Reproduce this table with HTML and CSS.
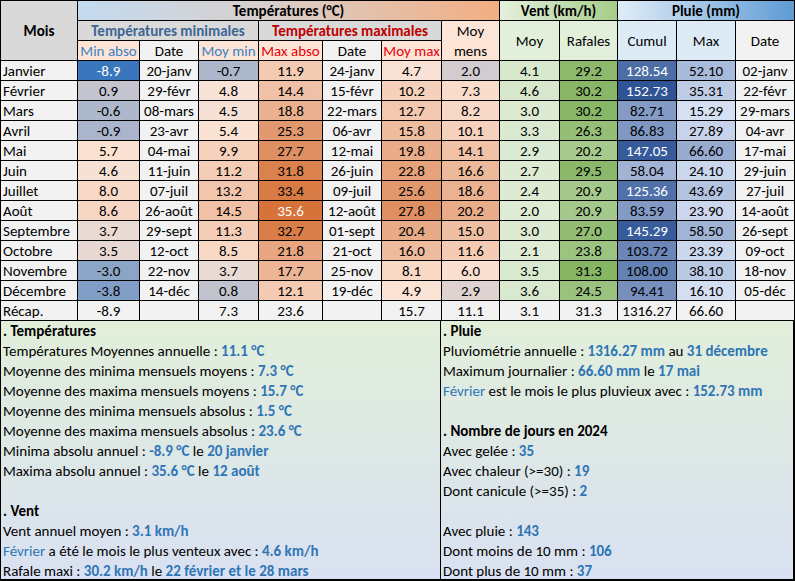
FILE: index.html
```html
<!DOCTYPE html>
<html lang="fr">
<head>
<meta charset="utf-8">
<title>Relevés 2024</title>
<link rel="stylesheet" href="styles.css">
</head>
<body>
<div class="sheet">
  <div class="grid">
    <div class="c hd-mois">Mois</div>
    <div class="c hd-temp">Températures (°C)</div>
    <div class="c hd-vent">Vent (km/h)</div>
    <div class="c hd-pluie">Pluie (mm)</div>

    <div class="c hd-tmin">Températures minimales</div>
    <div class="c hd-tmax">Températures maximales</div>
    <div class="c hd-mens">Moy<br>mens</div>
    <div class="c hd-vmoy">Moy</div>
    <div class="c hd-raf">Rafales</div>
    <div class="c hd-cumul">Cumul</div>
    <div class="c hd-pmax">Max</div>
    <div class="c hd-pdate">Date</div>

    <div class="c sub blue">Min abso</div>
    <div class="c sub-date">Date</div>
    <div class="c sub blue">Moy min</div>
    <div class="c sub red">Max abso</div>
    <div class="c sub-date">Date</div>
    <div class="c sub red">Moy max</div>

    <div class="c m">Janvier</div><div class="c t inv">-8.9</div><div class="c">20-janv</div><div class="c t">-0.7</div><div class="c t">11.9</div><div class="c">24-janv</div><div class="c t">4.7</div><div class="c t">2.0</div><div class="c w">4.1</div><div class="c w">29.2</div><div class="c r inv">128.54</div><div class="c r">52.10</div><div class="c">02-janv</div>
    <div class="c m">Février</div><div class="c t">0.9</div><div class="c">29-févr</div><div class="c t">4.8</div><div class="c t">14.4</div><div class="c">15-févr</div><div class="c t">10.2</div><div class="c t">7.3</div><div class="c w">4.6</div><div class="c w">30.2</div><div class="c r inv">152.73</div><div class="c r">35.31</div><div class="c">22-févr</div>
    <div class="c m">Mars</div><div class="c t">-0.6</div><div class="c">08-mars</div><div class="c t">4.5</div><div class="c t">18.8</div><div class="c">22-mars</div><div class="c t">12.7</div><div class="c t">8.2</div><div class="c w">3.0</div><div class="c w">30.2</div><div class="c r">82.71</div><div class="c r">15.29</div><div class="c">29-mars</div>
    <div class="c m">Avril</div><div class="c t">-0.9</div><div class="c">23-avr</div><div class="c t">5.4</div><div class="c t">25.3</div><div class="c">06-avr</div><div class="c t">15.8</div><div class="c t">10.1</div><div class="c w">3.3</div><div class="c w">26.3</div><div class="c r">86.83</div><div class="c r">27.89</div><div class="c">04-avr</div>
    <div class="c m">Mai</div><div class="c t">5.7</div><div class="c">04-mai</div><div class="c t">9.9</div><div class="c t">27.7</div><div class="c">12-mai</div><div class="c t">19.8</div><div class="c t">14.1</div><div class="c w">2.9</div><div class="c w">20.2</div><div class="c r inv">147.05</div><div class="c r">66.60</div><div class="c">17-mai</div>
    <div class="c m">Juin</div><div class="c t">4.6</div><div class="c">11-juin</div><div class="c t">11.2</div><div class="c t">31.8</div><div class="c">26-juin</div><div class="c t">22.8</div><div class="c t">16.6</div><div class="c w">2.7</div><div class="c w">29.5</div><div class="c r">58.04</div><div class="c r">24.10</div><div class="c">29-juin</div>
    <div class="c m">Juillet</div><div class="c t">8.0</div><div class="c">07-juil</div><div class="c t">13.2</div><div class="c t">33.4</div><div class="c">09-juil</div><div class="c t">25.6</div><div class="c t">18.6</div><div class="c w">2.4</div><div class="c w">20.9</div><div class="c r inv">125.36</div><div class="c r">43.69</div><div class="c">27-juil</div>
    <div class="c m">Août</div><div class="c t">8.6</div><div class="c">26-août</div><div class="c t">14.5</div><div class="c t inv">35.6</div><div class="c">12-août</div><div class="c t">27.8</div><div class="c t">20.2</div><div class="c w">2.0</div><div class="c w">20.9</div><div class="c r">83.59</div><div class="c r">23.90</div><div class="c">14-août</div>
    <div class="c m">Septembre</div><div class="c t">3.7</div><div class="c">29-sept</div><div class="c t">11.3</div><div class="c t">32.7</div><div class="c">01-sept</div><div class="c t">20.4</div><div class="c t">15.0</div><div class="c w">3.0</div><div class="c w">27.0</div><div class="c r inv">145.29</div><div class="c r">58.50</div><div class="c">26-sept</div>
    <div class="c m">Octobre</div><div class="c t">3.5</div><div class="c">12-oct</div><div class="c t">8.5</div><div class="c t">21.8</div><div class="c">21-oct</div><div class="c t">16.0</div><div class="c t">11.6</div><div class="c w">2.1</div><div class="c w">23.8</div><div class="c r">103.72</div><div class="c r">23.39</div><div class="c">09-oct</div>
    <div class="c m">Novembre</div><div class="c t">-3.0</div><div class="c">22-nov</div><div class="c t">3.7</div><div class="c t">17.7</div><div class="c">25-nov</div><div class="c t">8.1</div><div class="c t">6.0</div><div class="c w">3.5</div><div class="c w">31.3</div><div class="c r">108.00</div><div class="c r">38.10</div><div class="c">18-nov</div>
    <div class="c m">Décembre</div><div class="c t">-3.8</div><div class="c">14-déc</div><div class="c t">0.8</div><div class="c t">12.1</div><div class="c">19-déc</div><div class="c t">4.9</div><div class="c t">2.9</div><div class="c w">3.6</div><div class="c w">24.5</div><div class="c r">94.41</div><div class="c r">16.10</div><div class="c">05-déc</div>
    <div class="c m">Récap.</div><div class="c">-8.9</div><div class="c"></div><div class="c">7.3</div><div class="c">23.6</div><div class="c"></div><div class="c">15.7</div><div class="c">11.1</div><div class="c">3.1</div><div class="c">31.3</div><div class="c">1316.27</div><div class="c">66.60</div><div class="c"></div>
  </div>

  <div class="notes">
    <div class="panel panel-left">
      <div class="line title">. Températures</div>
      <div class="line">Températures Moyennes annuelle : <b class="v">11.1 °C</b></div>
      <div class="line">Moyenne des minima mensuels moyens : <b class="v">7.3 °C</b></div>
      <div class="line">Moyenne des maxima mensuels moyens : <b class="v">15.7 °C</b></div>
      <div class="line">Moyenne des minima mensuels absolus : <b class="v">1.5 °C</b></div>
      <div class="line">Moyenne des maxima mensuels absolus : <b class="v">23.6 °C</b></div>
      <div class="line">Minima absolu annuel : <b class="v">-8.9 °C</b> le <b class="v">20 janvier</b></div>
      <div class="line">Maxima absolu annuel : <b class="v">35.6 °C</b> le <b class="v">12 août</b></div>
      <div class="line"></div>
      <div class="line title">. Vent</div>
      <div class="line">Vent annuel moyen : <b class="v">3.1 km/h</b></div>
      <div class="line"><span class="mv">Février</span> a été le mois le plus venteux avec : <b class="v">4.6 km/h</b></div>
      <div class="line">Rafale maxi : <b class="v">30.2 km/h</b> le <b class="v">22 février et le 28 mars</b></div>
    </div>
    <div class="panel panel-right">
      <div class="line title">. Pluie</div>
      <div class="line">Pluviométrie annuelle : <b class="v">1316.27 mm</b> au <b class="v">31 décembre</b></div>
      <div class="line">Maximum journalier : <b class="v">66.60 mm</b> le <b class="v">17 mai</b></div>
      <div class="line"><span class="mv">Février</span> est le mois le plus pluvieux avec : <b class="v">152.73 mm</b></div>
      <div class="line"></div>
      <div class="line title">. Nombre de jours en 2024</div>
      <div class="line">Avec gelée : <b class="v">35</b></div>
      <div class="line">Avec chaleur (&gt;=30) : <b class="v">19</b></div>
      <div class="line">Dont canicule (&gt;=35) : <b class="v">2</b></div>
      <div class="line"></div>
      <div class="line">Avec pluie : <b class="v">143</b></div>
      <div class="line">Dont moins de 10 mm : <b class="v">106</b></div>
      <div class="line">Dont plus de 10 mm : <b class="v">37</b></div>
    </div>
  </div>
</div>
<script src="script.js"></script>
</body>
</html>
```

FILE: styles.css
```css
html, body {
  margin: 0;
  padding: 0;
  background: #ffffff;
}
body {
  font-family: Carlito, Lato, "DejaVu Sans", sans-serif;
  font-size: 15px;
  color: #000;
}
.sheet {
  width: 795px;
}
.grid {
  display: grid;
  grid-template-columns: 76px 61px 58px 59px 63px 58px 59px 57px 59px 57px 58px 58px 58px;
  grid-auto-rows: 19px;
  gap: 1px;
  padding: 1px;
  background: #000;
  width: 795px;
  box-sizing: border-box;
}
.c {
  display: flex;
  align-items: center;
  justify-content: center;
  background: #f2f2f2;
  white-space: nowrap;
  overflow: hidden;
  line-height: 1;
  padding-top: 1px;
}
.c.m {
  justify-content: flex-start;
  padding-left: 2px;
}
.inv {
  color: #fff;
}
.hd-mois {
  grid-column: 1;
  grid-row: 1 / span 3;
  background: #d9d9d9;
  font-weight: bold;
}
.hd-temp {
  grid-column: 2 / span 7;
  grid-row: 1;
  font-weight: bold;
  background: linear-gradient(to right, #c3dbf0, #d9cfcc 45%, #f2ae82);
}
.hd-vent {
  grid-column: 9 / span 2;
  grid-row: 1;
  font-weight: bold;
  background: linear-gradient(to right, #e4f0dc, #a6cd8b);
}
.hd-pluie {
  grid-column: 11 / span 3;
  grid-row: 1;
  font-weight: bold;
  background: linear-gradient(to right, #e1edf8, #5e9bd4);
}
.hd-tmin {
  grid-column: 2 / span 3;
  grid-row: 2;
  background: #d9d9d9;
  color: #3d6793;
  font-weight: bold;
}
.hd-tmax {
  grid-column: 5 / span 3;
  grid-row: 2;
  background: #d9d9d9;
  color: #c00000;
  font-weight: bold;
}
.hd-mens {
  grid-column: 8;
  grid-row: 2 / span 2;
  background: #fce4d6;
  text-align: center;
  line-height: 20px;
}
.hd-vmoy {
  grid-column: 9;
  grid-row: 2 / span 2;
  background: #e2efda;
}
.hd-raf {
  grid-column: 10;
  grid-row: 2 / span 2;
  background: #e2efda;
}
.hd-cumul {
  grid-column: 11;
  grid-row: 2 / span 2;
  background: #ddebf7;
}
.hd-pmax {
  grid-column: 12;
  grid-row: 2 / span 2;
  background: #ddebf7;
}
.hd-pdate {
  grid-column: 13;
  grid-row: 2 / span 2;
  background: #f2f2f2;
}
.sub {
  grid-row: 3;
  background: #fce4d6;
}
.sub-date {
  grid-row: 3;
  background: #f2f2f2;
}
.sub.blue {
  color: #3b82c4;
}
.sub.red {
  color: #e8000b;
}
.notes {
  display: flex;
  height: 260px;
}
.panel {
  display: flex;
  flex-direction: column;
  box-sizing: border-box;
  height: 260px;
  background: linear-gradient(to bottom, #e2efda, #d9e1f2);
  border-bottom: 2px solid #000;
  padding-left: 2px;
}
.panel-left {
  width: 441px;
  border-left: 1px solid #000;
  border-right: 1px solid #000;
}
.panel-right {
  width: 354px;
  border-right: 2px solid #000;
}
.line {
  height: 20px;
  line-height: 20px;
  flex: none;
  white-space: nowrap;
}
.title {
  font-weight: bold;
}
.v {
  color: #2f75b5;
  font-weight: bold;
}
.mv {
  color: #2f75b5;
}
```

FILE: script.js
```js
(function () {
  var scales = {
    t: [[-8.9, [58, 118, 188]], [5, [252, 228, 214]], [35.6, [213, 115, 58]]],
    w: [[2.0, [222, 236, 213]], [31.3, [134, 181, 100]]],
    r: [[15.29, [214, 224, 243]], [152.73, [47, 84, 150]]]
  };
  function mix(a, b, f) {
    return a.map(function (v, i) { return Math.round(v + (b[i] - v) * f); });
  }
  function colour(v, stops) {
    if (v <= stops[0][0]) return stops[0][1];
    for (var i = 1; i < stops.length; i++) {
      if (v <= stops[i][0]) {
        var f = (v - stops[i - 1][0]) / (stops[i][0] - stops[i - 1][0]);
        return mix(stops[i - 1][1], stops[i][1], f);
      }
    }
    return stops[stops.length - 1][1];
  }
  Object.keys(scales).forEach(function (k) {
    document.querySelectorAll('.c.' + k).forEach(function (el) {
      var c = colour(parseFloat(el.textContent), scales[k]);
      el.style.backgroundColor = 'rgb(' + c.join(',') + ')';
    });
  });
})();
```
